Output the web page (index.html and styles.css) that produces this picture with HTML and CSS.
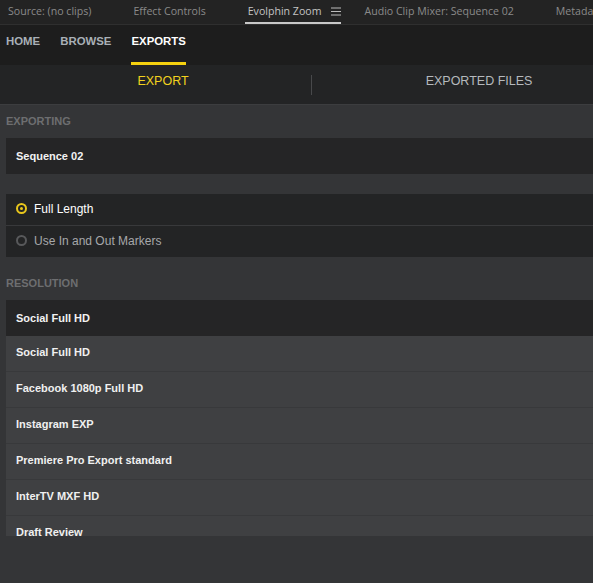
FILE: index.html
```html
<!DOCTYPE html>
<html lang="en">
<head>
  <meta charset="UTF-8">
  <meta name="viewport" content="width=device-width, initial-scale=1.0">
  <title>Evolphin Zoom - Exports</title>
  <link rel="stylesheet" href="styles.css">
</head>
<body>
  <div class="app">
    <div class="panel-tabs">
      <span class="panel-tab">Source: (no clips)</span>
      <span class="panel-tab">Effect Controls</span>
      <span class="panel-tab active">Evolphin Zoom
        <svg class="menu-icon" width="10" height="9" viewBox="0 0 10 9">
          <path d="M0 1h10M0 4.5h10M0 8h10" stroke="#bdbdbd" stroke-width="1"/>
        </svg>
      </span>
      <span class="panel-tab">Audio Clip Mixer: Sequence 02</span>
      <span class="panel-tab">Metadata</span>
    </div>

    <nav class="main-nav">
      <a class="nav-item">HOME</a>
      <a class="nav-item">BROWSE</a>
      <a class="nav-item active">EXPORTS</a>
    </nav>

    <div class="sub-tabs">
      <div class="sub-tab active">EXPORT</div>
      <div class="sub-divider"></div>
      <div class="sub-tab files">EXPORTED FILES</div>
    </div>

    <div class="content">
      <div class="section-label">EXPORTING</div>
      <div class="field">Sequence 02</div>

      <div class="range-box">
        <div class="range-row selected">
          <span class="radio"></span>
          <span>Full Length</span>
        </div>
        <div class="range-row">
          <span class="radio"></span>
          <span>Use In and Out Markers</span>
        </div>
      </div>

      <div class="section-label gap-top">RESOLUTION</div>
      <div class="preset-select">
        <div class="field">Social Full HD</div>
        <div class="preset-list">
          <div class="preset">Social Full HD</div>
          <div class="preset">Facebook 1080p Full HD</div>
          <div class="preset">Instagram EXP</div>
          <div class="preset">Premiere Pro Export standard</div>
          <div class="preset">InterTV MXF HD</div>
          <div class="preset">Draft Review</div>
        </div>
      </div>
    </div>
  </div>
</body>
</html>
```

FILE: styles.css
```css
html, body {
  margin: 0;
  padding: 0;
  height: 100%;
  overflow: hidden;
  background-color: #333436;
}

body {
  font-family: "Liberation Sans", Arial, sans-serif;
}

.app {
  height: 100%;
  display: flex;
  flex-direction: column;
  background-color: #343537;
}

/* host application panel tabs */
.panel-tabs {
  height: 24px;
  display: flex;
  gap: 42px;
  padding-left: 8px;
  background-color: #232323;
  border-bottom: 1px solid #2f2f2f;
  white-space: nowrap;
  overflow: hidden;
}

.panel-tab {
  font-family: "Open Sans", sans-serif;
  font-size: 10.6px;
  line-height: 20px;
  color: #8a8a8a;
  border-bottom: 2px solid transparent;
  display: flex;
  align-items: center;
  gap: 10px;
}

.panel-tab.active {
  color: #c4c4c4;
  border-bottom-color: #c8c8c8;
  margin-left: -3px;
  padding-left: 3px;
  margin-right: -19px;
}

.menu-icon {
  display: block;
}

/* plugin navigation */
.main-nav {
  height: 40px;
  display: flex;
  gap: 20px;
  padding-left: 6px;
  background-color: #1d1d1d;
}

.nav-item {
  font-size: 11.4px;
  font-weight: bold;
  line-height: 17px;
  padding-top: 8px;
  padding-bottom: 12px;
  color: #a9b0b7;
  border-bottom: 3px solid transparent;
  cursor: pointer;
}

.nav-item.active {
  color: #ffffff;
  border-bottom-color: #f5d10f;
}

.sub-tabs {
  height: 39px;
  display: flex;
  padding-left: 15px;
  background-color: #232425;
  border-bottom: 1px solid #3c3d3f;
}

.sub-tab {
  flex: 1;
  text-align: center;
  font-size: 12.5px;
  line-height: 32px;
  color: #b5b9bd;
}

.sub-tab.active {
  flex: 0 0 296px;
  color: #f2d21e;
}

.sub-tab.files {
  padding-left: 53px;
}

.sub-divider {
  width: 1px;
  height: 20px;
  margin-top: 10px;
  background-color: #48494b;
}

/* export form */
.content {
  padding-left: 6px;
  flex: 1;
  min-height: 0;
}

.section-label {
  height: 33px;
  line-height: 33px;
  font-size: 11px;
  font-weight: bold;
  color: #6d6e70;
}

.section-label.gap-top {
  margin-top: 10px;
}

.field {
  height: 36px;
  line-height: 36px;
  padding-left: 10px;
  font-size: 11px;
  font-weight: bold;
  color: #f2f2f2;
  background-color: #252526;
}

.range-box {
  margin-top: 20px;
  background-color: #232425;
}

.range-row {
  height: 31px;
  display: flex;
  align-items: center;
  gap: 7px;
  padding-left: 10px;
  padding-bottom: 2px;
  box-sizing: border-box;
  font-size: 12px;
  color: #a6a8aa;
}

.range-row + .range-row {
  border-top: 1px solid #38393b;
  height: 32px;
}

.range-row.selected {
  color: #ffffff;
}

.radio {
  width: 11px;
  height: 11px;
  box-sizing: border-box;
  border: 2px solid #58595b;
  border-radius: 50%;
  display: flex;
  align-items: center;
  justify-content: center;
}

.range-row.selected .radio {
  border-color: #e9c71c;
}

.range-row.selected .radio::after {
  content: "";
  width: 3px;
  height: 3px;
  border-radius: 50%;
  background-color: #e9c71c;
}

.preset-list {
  height: 200px;
  overflow: hidden;
}

.preset {
  height: 35px;
  line-height: 32px;
  padding-left: 10px;
  font-size: 11px;
  font-weight: bold;
  color: #f0f0f0;
  background-color: #3f4042;
  border-bottom: 1px solid #38393b;
}
```
